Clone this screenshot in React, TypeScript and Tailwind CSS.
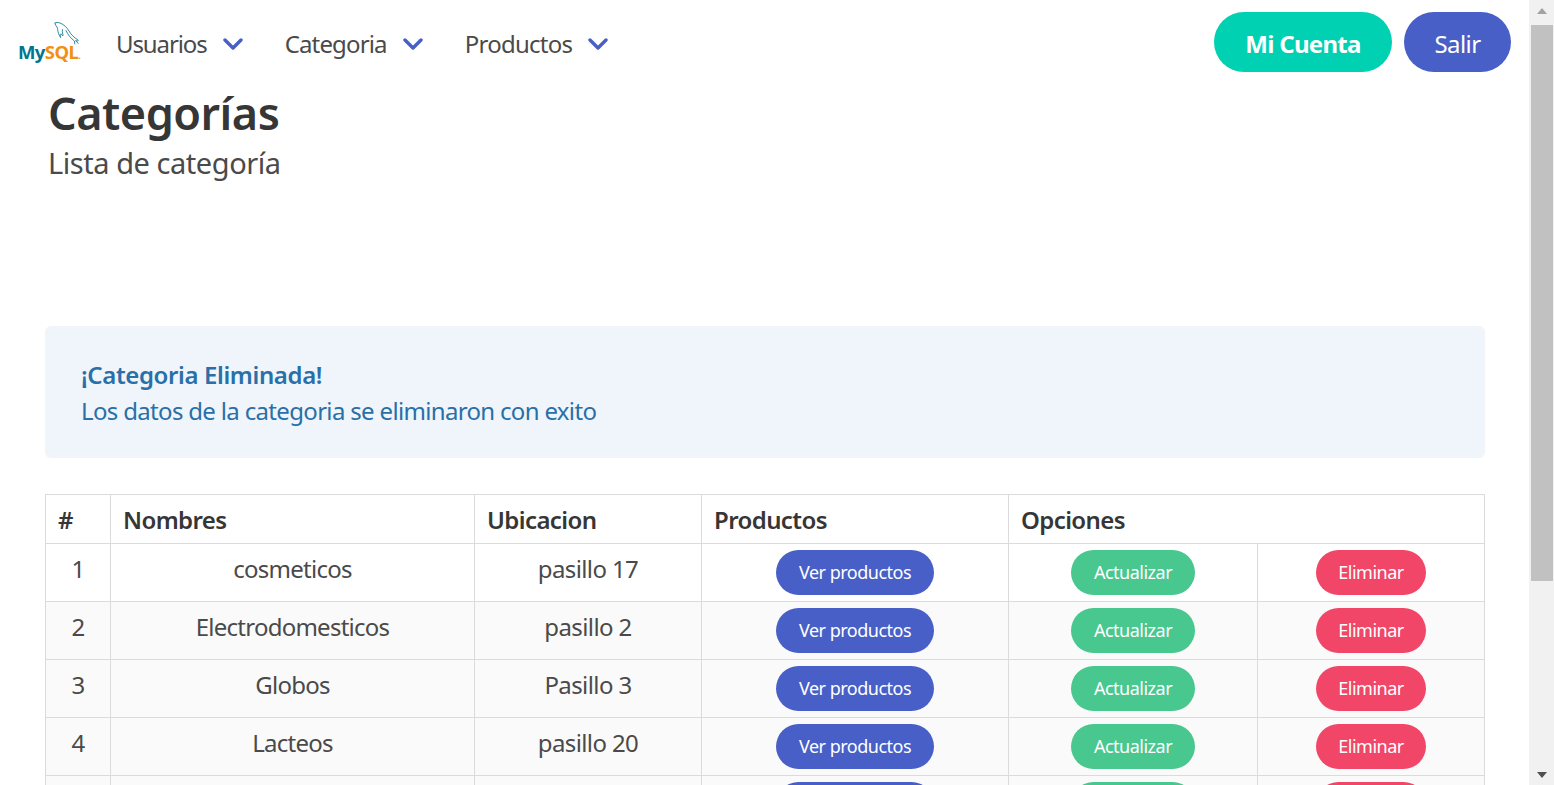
import React from "react";

const rows = [
  { n: "1", name: "cosmeticos", loc: "pasillo 17" },
  { n: "2", name: "Electrodomesticos", loc: "pasillo 2" },
  { n: "3", name: "Globos", loc: "Pasillo 3" },
  { n: "4", name: "Lacteos", loc: "pasillo 20" },
  { n: "", name: "", loc: "" },
];

function Chevron() {
  return (
    <svg width="20" height="14" viewBox="0 0 20 14" className="block" fill="none">
      <path d="M2 3 L10 11 L18 3" stroke="#485fc7" strokeWidth="3.4" strokeLinecap="round" strokeLinejoin="round" />
    </svg>
  );
}

function NavItem({ label, className, tracking }: { label: string; className: string; tracking: string }) {
  return (
    <div className={`flex items-center ${className}`}>
      <span className={`text-[24px] leading-[36px] text-[#4a4a4a] ${tracking}`}>{label}</span>
      <span className="ml-[16px]"><Chevron /></span>
    </div>
  );
}

function Logo() {
  return (
    <div className="relative w-[62px] h-[46px] ml-[18px] mt-[-2px] shrink-0">
      <svg width="28" height="28" viewBox="0 0 28 28" fill="none" className="absolute left-[35px] top-[1px]">
        <path
          d="M2 2 C3 1 5 1.2 7 2 C11 3.5 14 6.5 16 10 C18 13.5 21 16.5 25 19 C25.5 19.6 25.2 20 24.4 20 L22.6 19.6 L25.2 22.5 M2 2 C1.7 3.5 3.2 4.8 4 6 C5 7.6 4.4 9.6 5.6 12.6 C6.2 14.4 7 15.6 7.6 16.6 C7.8 15 6.8 13.6 7.8 12.8 C8.6 13.2 9.2 14.4 10 14.8 C10 13 9 11.2 9.4 8.6 M13 9.6 C15 13.6 17.4 17 21.4 20 L21.8 23"
          stroke="#1b7e93"
          strokeWidth="0.9"
          strokeLinecap="round"
          strokeLinejoin="round"
        />
      </svg>
      <div className="absolute left-0 top-[20px] text-[18.5px] leading-[24px] font-bold tracking-[-0.6px]">
        <span className="text-[#00758f]">My</span>
        <span className="text-[#f29111]">SQL</span>
        <span className="text-[9px] text-[#f29111]">.</span>
      </div>
    </div>
  );
}

function Pill({ label, color, width }: { label: string; color: string; width: string }) {
  return (
    <a className={`inline-flex h-[45px] items-center justify-center rounded-full text-white text-[18px] tracking-[-0.5px] ${color} ${width}`}>
      {label}
    </a>
  );
}

function Scrollbar() {
  return (
    <div className="w-[25px] h-full shrink-0 bg-[#f1f1f1] flex flex-col items-center">
      <div className="h-[25px] w-full flex items-center justify-center">
        <div className="w-0 h-0 border-x-[5px] border-x-transparent border-b-[6px] border-b-[#a3a3a3] mt-[-4px]"></div>
      </div>
      <div className="w-[22px] h-[556px] bg-[#c1c1c1]"></div>
      <div className="flex-1"></div>
      <div className="h-[25px] w-full flex items-center justify-center">
        <div className="w-0 h-0 border-x-[5px] border-x-transparent border-t-[6px] border-t-[#505050] mt-[4px]"></div>
      </div>
    </div>
  );
}

export default function App() {
  return (
    <div className="flex h-[785px] w-full overflow-hidden bg-white font-['Noto_Sans',sans-serif] text-[#4a4a4a]">
      <div className="flex-1 min-w-0 overflow-hidden">
        <nav className="flex h-[88px] items-center">
          <Logo />
          <NavItem label="Usuarios" className="ml-[36px]" tracking="tracking-[-1.1px]" />
          <NavItem label="Categoria" className="ml-[42px]" tracking="tracking-[-0.85px]" />
          <NavItem label="Productos" className="ml-[42px]" tracking="tracking-[-0.75px]" />
          <div className="ml-auto mr-[18px] mb-[4px] flex items-center gap-[12px]">
            <a className="flex h-[60px] w-[178px] items-center justify-center rounded-full bg-[#00d1b2] pt-[3px] text-[24px] font-bold tracking-[-0.7px] text-white">
              Mi Cuenta
            </a>
            <a className="flex h-[60px] w-[107px] items-center justify-center rounded-full bg-[#485fc7] pt-[3px] text-[24px] tracking-[-0.6px] text-white">
              Salir
            </a>
          </div>
        </nav>

        <section className="px-[48px]">
          <h1 className="text-[45px] leading-[52px] mt-[-1px] font-semibold tracking-[-0.5px] text-[#363636]">Categorías</h1>
          <h2 className="text-[29px] leading-[44px] mt-[2px] tracking-[-0.45px] text-[#4a4a4a]">Lista de categoría</h2>
        </section>

        <div className="ml-[45px] mt-[141px] h-[132px] w-[1440px] rounded-[6px] bg-[#eff5fb] px-[36px] pt-[31px] text-[#296fa8]">
          <p className="text-[24px] leading-[36px] font-semibold tracking-[-0.38px]">¡Categoria Eliminada!</p>
          <p className="text-[24px] leading-[36px] tracking-[-0.67px]">Los datos de la categoria se eliminaron con exito</p>
        </div>

        <table className="ml-[45px] mt-[36px] w-[1439px] table-fixed border-collapse border border-[#dbdbdb] text-[24px]">
          <colgroup>
            <col className="w-[65px]" />
            <col className="w-[364px]" />
            <col className="w-[227px]" />
            <col className="w-[307px]" />
            <col className="w-[249px]" />
            <col className="w-[227px]" />
          </colgroup>
          <thead>
            <tr className="h-[49px]">
              {["#", "Nombres", "Ubicacion", "Productos"].map((h) => (
                <th key={h} className="border border-[#dbdbdb] px-[12px] pt-[2px] text-left text-[24px] font-semibold tracking-[-0.6px] text-[#363636]">
                  {h}
                </th>
              ))}
              <th colSpan={2} className="border border-[#dbdbdb] px-[12px] pt-[2px] text-left text-[24px] font-semibold tracking-[-0.6px] text-[#363636]">
                Opciones
              </th>
            </tr>
          </thead>
          <tbody>
            {rows.map((r, i) => (
              <tr key={i} className={`h-[58px] ${i === 0 ? "bg-white" : "bg-[#fafafa]"}`}>
                <td className="border border-[#dbdbdb] text-center align-top pt-[7px] leading-[36px] tracking-[-0.5px]">{r.n}</td>
                <td className="border border-[#dbdbdb] text-center align-top pt-[7px] leading-[36px] tracking-[-0.75px]">{r.name}</td>
                <td className="border border-[#dbdbdb] text-center align-top pt-[7px] leading-[36px] tracking-[-0.6px]">{r.loc}</td>
                <td className="border border-[#dbdbdb] text-center align-top pt-[6px] pb-[6px]">
                  <Pill label={r.n ? "Ver productos" : ""} color="bg-[#485fc7]" width="w-[158px]" />
                </td>
                <td className="border border-[#dbdbdb] text-center align-top pt-[6px] pb-[6px]">
                  <Pill label={r.n ? "Actualizar" : ""} color="bg-[#48c78e]" width="w-[124px]" />
                </td>
                <td className="border border-[#dbdbdb] text-center align-top pt-[6px] pb-[6px]">
                  <Pill label={r.n ? "Eliminar" : ""} color="bg-[#f14668]" width="w-[110px]" />
                </td>
              </tr>
            ))}
          </tbody>
        </table>
      </div>
      <Scrollbar />
    </div>
  );
}
